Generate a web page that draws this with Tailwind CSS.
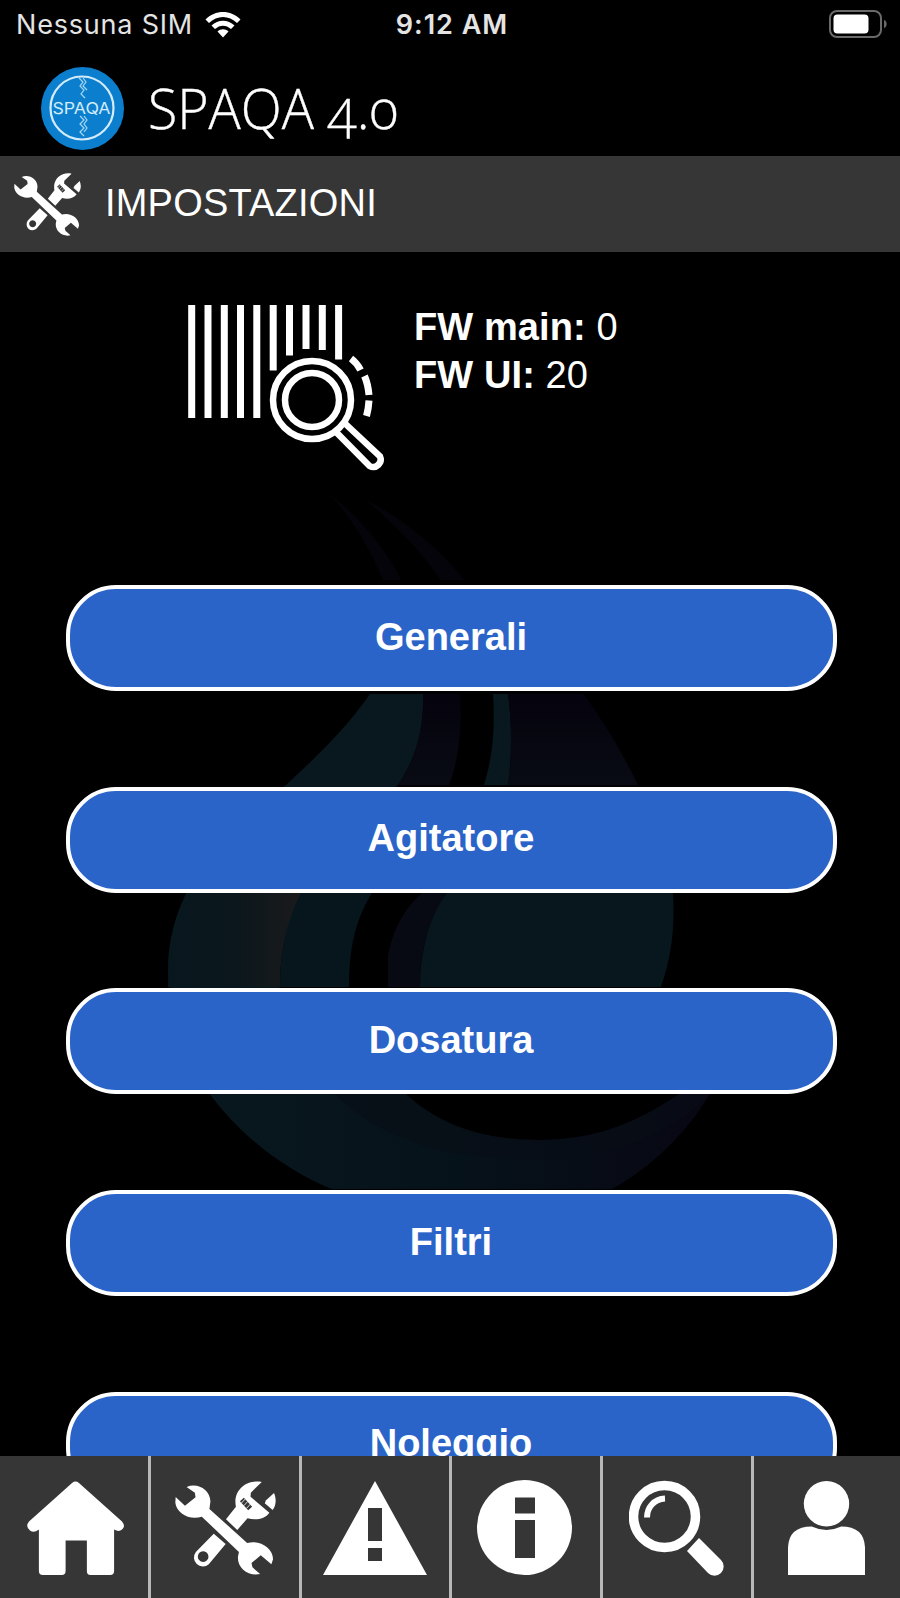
<!DOCTYPE html>
<html lang="it">
<head>
  <meta charset="UTF-8" />
  <meta name="viewport" content="width=device-width, initial-scale=1.0"/>
  <title>SPAQA 4.0 - Impostazioni</title>
  <script src="https://cdn.jsdelivr.net/npm/@tailwindcss/browser@4"></script>
</head>
<body class="bg-black">
  <!-- shared tools icon -->
  <svg class="hidden">
    <symbol id="tools" viewBox="523 123 305 282" preserveAspectRatio="none">
      <path fill="#fff" d="M558 141C592 127 629 150 630 184L627 207L741 309C780 298 820 325 819 358L814 373L782 346L754 369L757 382L780 402C745 410 711 385 713 350L716 336L604 230C567 242 528 220 524 188L525 171L553 197L585 172L583 158Z"/>
      <path fill="#fff" fill-rule="evenodd" d="M785 126C738 117 697 152 707 200L677 238L711 270L742 235C768 242 795 237 808 218L751 170L752 158ZM719 184L731 173L756 200L744 211Z"/>
      <path stroke="#fff" stroke-width="2.5" d="M723 190L735 177M731 197L743 184M739 205L751 192"/>
      <path fill="#fff" d="M822 159C830 178 828 197 818 210L794 190L798 181Z"/>
      <path fill="#fff" fill-rule="evenodd" d="M640 281L586 336A27 27 0 0 0 625 373L676 312ZM608 334A16 16 0 1 1 607.900 334Z"/>
    </symbol>
  </svg>

  <div class="flex h-[1598px] w-[900px] flex-col overflow-hidden bg-black font-['Liberation_Sans',sans-serif] text-white">
    <!-- status bar -->
    <div class="grid h-12 shrink-0 grid-cols-3 items-center pr-3 pl-4 font-['Inter',sans-serif] text-[27px] text-[#e4e4e4]">
      <div class="flex items-center gap-3">
        <span class="pt-0.5 tracking-[0.8px] whitespace-nowrap">Nessuna SIM</span>
        <svg class="h-[27px] w-9" viewBox="0 0 36 27" fill="#fff">
          <path d="M0.500 8.500C10-1.500 26-1.500 35.500 8.500L32 12C24 4 12 4 4 12Z"/>
          <path d="M6.500 14.500C13 8 23 8 29.500 14.500L26 18C21 13.500 15 13.500 10 18Z"/>
          <path d="M12.500 20.500C15.500 17.500 20.500 17.500 23.500 20.500L18 26.500Z"/>
        </svg>
      </div>
      <div class="pt-0.5 text-center font-semibold tracking-[1px]">9:12 AM</div>
      <svg class="h-7 w-[60px] justify-self-end" viewBox="0 0 60 28">
        <rect x="2" y="1" width="51" height="26" rx="7" fill="none" stroke="#6a6a6a" stroke-width="2"/>
        <rect x="5.500" y="4.500" width="35" height="19" rx="4" fill="#fff"/>
        <path d="M56 10C59.500 11 59.500 17 56 18Z" fill="#6a6a6a"/>
      </svg>
    </div>

    <!-- app title -->
    <header class="flex h-[108px] shrink-0 items-center pt-2 pl-[41px]">
      <svg class="mt-1 h-[83px] w-[83px]" viewBox="0 0 83 83">
        <circle cx="41.500" cy="41.500" r="41.500" fill="#0b7fcd"/>
        <circle cx="41" cy="41" r="31.500" fill="none" stroke="#d3ebfb" stroke-width="2.200"/>
        <path d="M38 11l4 4-3 4 4 4-3 4 4 4M42 11l3 4-3 4 4 4M39 49l4 4-4 4 4 4-4 4 4 4M43 49l3 4-3 4 3 4-3 4" fill="none" stroke="#a8d7f4" stroke-width="1.200"/>
        <text x="40.500" y="47" text-anchor="middle" textLength="58" lengthAdjust="spacingAndGlyphs" fill="#d3ebfb" font-family="Inter" font-size="16">SPAQA</text>
      </svg>
      <h1 class="ml-6 origin-left scale-x-[0.975] pt-0.5 font-['Open_Sans',sans-serif] text-[55px] leading-none font-light whitespace-nowrap oldstyle-nums [-webkit-text-stroke:0.4px_white]">SPAQA 4.0</h1>
    </header>

    <!-- section bar -->
    <div class="flex h-24 shrink-0 items-center gap-6 bg-[#363636] pl-3.5">
      <svg class="h-[63px] w-[67px]"><use href="#tools"/></svg>
      <h2 class="pb-0.5 text-[38px] tracking-[0.2px]">IMPOSTAZIONI</h2>
    </div>

    <main class="relative min-h-0 flex-1 overflow-hidden">
      <!-- flame watermark -->
      <svg class="absolute inset-0 h-[1204px] w-[900px]" viewBox="0 252 900 1204">
        <defs>
          <linearGradient id="ember"><stop offset="0" stop-color="#08171e"/><stop offset="0.5" stop-color="#0b171c"/><stop offset="1" stop-color="#1a1a1c"/></linearGradient>
          <linearGradient id="violet" x2="0" y2="1"><stop offset="0" stop-color="#05030d"/><stop offset="1" stop-color="#080b14"/></linearGradient>
          <linearGradient id="base"><stop offset="0" stop-color="#08171e"/><stop offset="0.500" stop-color="#06121a"/><stop offset="1" stop-color="#080713"/></linearGradient>
        </defs>
        <path fill="#05040a" d="M328 493C355 513 388 550 401 580L383 580C368 545 350 515 328 493ZM366 500C410 522 445 555 464 580L441 580C420 550 395 525 366 500Z"/>
        <path fill="#09181e" d="M370 694C345 730 315 758 286 785C210 840 168 900 168 970C170 1010 180 1055 210 1094C240 1135 285 1170 332 1189L477 1157C350 1115 270 1050 280 970C283 900 350 835 398 785C418 755 424 725 423 694Z"/>
        <path fill="url(#ember)" d="M188 893H301C285 925 280 955 280 987H168C168 950 175 920 188 893Z"/>
        <path fill="#07161d" d="M301 893H372C355 920 349 950 349 987H280C280 955 285 925 301 893Z"/>
        <path fill="url(#violet)" d="M423 694H460C462 730 459 758 449 785H398C418 755 424 725 423 694Z"/>
        <path fill="#09181e" d="M493 694H508C512 725 512 755 508 785H484C493 755 495 730 493 694Z"/>
        <path fill="url(#violet)" d="M508 694H583C603 720 622 752 638 785H508C512 755 512 725 508 694Z"/>
        <path fill="#080a13" d="M422 893H450C428 920 420 950 420 987H388V955C393 930 403 910 422 893Z"/>
        <path fill="#08161d" d="M447 893H673C675 925 672 955 661 987H420C420 950 430 915 447 893Z"/>
        <path fill="url(#base)" d="M210 1094H406C440 1126 485 1140 539 1140C600 1140 640 1120 679 1094H710C685 1135 650 1168 612 1189H332C285 1170 240 1135 210 1094Z"/>
        <path fill="#080d15" fill-opacity="0.6" d="M335 1094H406C440 1126 485 1140 539 1140C600 1140 640 1120 679 1094H710C665 1140 600 1160 535 1160C450 1160 380 1140 335 1094Z"/>
      </svg>

      <div class="relative flex flex-col items-center">
        <div class="flex h-[333px] w-full gap-[29px] pt-[51px] pl-[186px]">
          <svg class="mt-px h-[170px] w-[199px]" viewBox="186 304 199 170" fill="none" stroke="#fff">
            <path stroke-width="7" d="M191.700 305V418M208 305V418M224.300 305V418M240.500 305V418M256.800 305V418M273.200 305V370.500M289.500 305V355.500M306 305V349M322.300 305V350M338.600 305V359.500"/>
            <circle cx="312" cy="400" r="39" stroke-width="6.500"/>
            <circle cx="312" cy="400" r="27" stroke-width="6.500"/>
            <path stroke-width="6.500" d="M336.500 432.500L369.500 466A7.500 7.500 0 0 0 380 456.500L345 423.500"/>
            <path stroke-width="7" d="M351 358.500Q357 363 360.500 370M364.500 376Q368 384 369 395M369 400.500Q368.500 409 366.500 416"/>
          </svg>
          <div class="text-[38px] leading-12 tracking-[0.1px]">
            <p><b>FW main:</b> 0</p>
            <p><b>FW UI:</b> 20</p>
          </div>
        </div>

        <div class="flex flex-col gap-[95.700px] pl-[2px] text-[38px] font-bold">
          <button class="h-[106px] w-[771px] rounded-[50px] border-4 border-white bg-[#2b64c8] pb-0.5">Generali</button>
          <button class="h-[106px] w-[771px] rounded-[50px] border-4 border-white bg-[#2b64c8] pb-0.5">Agitatore</button>
          <button class="h-[106px] w-[771px] rounded-[50px] border-4 border-white bg-[#2b64c8] pb-0.5">Dosatura</button>
          <button class="h-[106px] w-[771px] rounded-[50px] border-4 border-white bg-[#2b64c8] pb-0.5">Filtri</button>
          <button class="h-[106px] w-[771px] rounded-[50px] border-4 border-white bg-[#2b64c8] pb-0.5">Noleggio</button>
        </div>
      </div>
    </main>

    <!-- tab bar -->
    <nav class="grid h-[142px] shrink-0 grid-cols-[151px_151px_150px_151px_151px_146px] bg-[#363636]">
      <a class="border-r-[3px] border-[#b8b8b8] pt-[25px] pl-[26px]">
        <svg class="h-[95px] w-[99px]" viewBox="0 0 100 96" fill="#fff"><path d="M46.500 2Q50 -1 53.500 2L97 41Q101 46 97 49Q94 52 89 49V91Q89 95 85 95H65Q61.500 95 61.500 91V60H40V91Q40 95 36 95H17Q13 95 13 91V49Q8 53 4 50Q-1 46 3 41Z"/></svg>
      </a>
      <a class="border-r-[3px] border-[#b8b8b8] pt-[25px] pl-6">
        <svg class="h-[94px] w-[101px]"><use href="#tools"/></svg>
      </a>
      <a class="border-r-[3px] border-[#b8b8b8] pt-[25px] pl-[21px]">
        <svg class="h-[94px] w-[104px]" viewBox="0 0 104 94"><path fill="#fff" fill-rule="evenodd" d="M52 0L104 94H0ZM45 27V60H59V27ZM45 67V80H59V67Z"/></svg>
      </a>
      <a class="border-r-[3px] border-[#b8b8b8] pt-6 pl-[25px]">
        <svg class="h-[95px] w-[95px]" viewBox="0 0 95 95"><circle cx="47.500" cy="47.500" r="47.500" fill="#fff"/><path fill="#363636" d="M38 17.500H58V33.500H38ZM38 40H58V78H38Z"/></svg>
      </a>
      <a class="border-r-[3px] border-[#b8b8b8] pt-6 pl-[26px]">
        <svg class="h-24 w-24" viewBox="0 0 96 96" fill="none" stroke="#fff">
          <circle cx="35.500" cy="36.500" r="31" stroke-width="9.500"/>
          <path stroke-width="6" d="M18 37.500C18 27.500 25 19 36 18.500"/>
          <path fill="#fff" stroke="none" d="M70 58L92 80A9 9 0 0 1 79 93L58 71Z"/>
        </svg>
      </a>
      <a class="pt-[25px] pl-[34px]">
        <svg class="h-[94px] w-[77px]" viewBox="0 0 78 95" fill="#fff"><circle cx="39" cy="23" r="23"/><path d="M0 95V67Q1 46 24 46Q39 53 54 46Q77 46 78 67V95Z"/></svg>
      </a>
    </nav>
  </div>
</body>
</html>
